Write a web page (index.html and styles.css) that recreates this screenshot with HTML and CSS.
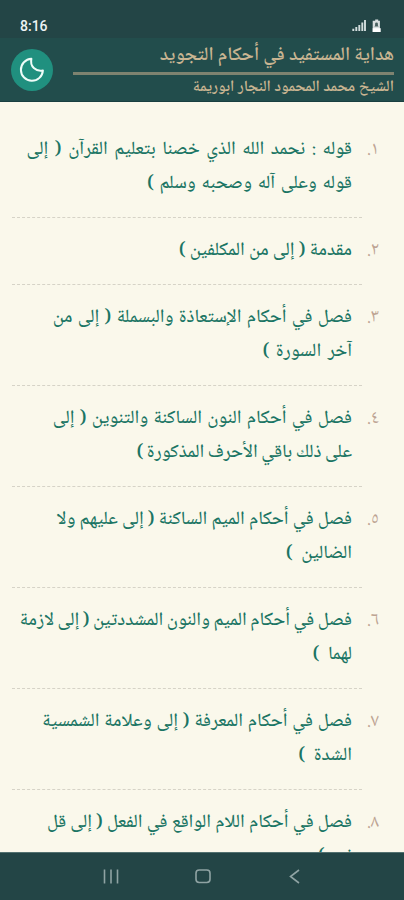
FILE: index.html
```
<!DOCTYPE html>
<html lang="ar" dir="rtl">
<head>
<meta charset="utf-8">
<title>هداية المستفيد في أحكام التجويد</title>
<link rel="stylesheet" href="styles.css">
</head>
<body>
<div class="status" dir="ltr">
  <span class="time">8:16</span>
  <svg class="status-icons" width="30" height="14" viewBox="0 0 30 14">
    <path d="M1.3 12V9.8M4.3 12V8M7.3 12V6M10.3 12V3.5M13 12V1" stroke="#d3dede" stroke-width="1.9" fill="none"/>
    <path d="M21.5 1.8h1.7V.5h3v1.3h1.7v11.1h-7.2V1.8z" fill="#d9dfe0"/>
    <path d="M22.4 7.4h4.2l-.7-.9V4.8a1.4 1.4 0 0 0-2.8 0v1.7z" fill="#48605f"/>
    <path d="M20.7 9.2h8v3.8h-8z" fill="#fff"/>
  </svg>
</div>
<header class="header">
  <div class="titles">
    <h1 class="title">هداية المستفيد في أحكام التجويد</h1>
    <p class="author">الشيخ محمد المحمود النجار ابوريمة</p>
  </div>
  <button class="theme" aria-label="الوضع الليلي">
    <svg width="26" height="26" viewBox="0 0 26 26"><path d="M12.4 1.8A11 11 0 1 0 23.9 13.4C16.8 14.8 10.6 9.6 12.4 1.8Z" fill="none" stroke="#eefcf8" stroke-width="2" stroke-linejoin="round"/></svg>
  </button>
</header>
<main class="list">
  <div class="item"><span class="num">١.</span><p class="text"><span class="line loosest">قوله : نحمد الله الذي خصنا بتعليم القرآن ( إلى</span> <span class="line looser">قوله وعلى آله وصحبه وسلم )</span></p></div>
  <div class="item"><span class="num">٢.</span><p class="text"><span class="line">مقدمة ( إلى من المكلفين )</span></p></div>
  <div class="item"><span class="num">٣.</span><p class="text"><span class="line loose">فصل في أحكام الإستعاذة والبسملة ( إلى من</span> <span class="line loosest">آخر السورة )</span></p></div>
  <div class="item"><span class="num">٤.</span><p class="text"><span class="line loose">فصل في أحكام النون الساكنة والتنوين ( إلى</span> <span class="line tight">على ذلك باقي الأحرف المذكورة )</span></p></div>
  <div class="item"><span class="num">٥.</span><p class="text"><span class="line">فصل في أحكام الميم الساكنة ( إلى عليهم ولا</span> <span class="line wide">الضالين )</span></p></div>
  <div class="item"><span class="num">٦.</span><p class="text"><span class="line tight">فصل في أحكام الميم والنون المشددتين ( إلى لازمة</span> <span class="line wide">لهما )</span></p></div>
  <div class="item"><span class="num">٧.</span><p class="text"><span class="line slight">فصل في أحكام المعرفة ( إلى وعلامة الشمسية</span> <span class="line wide">الشدة )</span></p></div>
  <div class="item"><span class="num">٨.</span><p class="text"><span class="line">فصل في أحكام اللام الواقع في الفعل ( إلى قل</span> <span class="line">نعم )</span></p></div>
</main>
<nav class="nav" dir="ltr">
  <svg width="18" height="18" viewBox="0 0 18 18"><path d="M2.5 1.5v14M9 1.5v14M15.5 1.5v14"/></svg>
  <svg width="18" height="18" viewBox="0 0 18 18"><rect x="2" y="2" width="14" height="12.5" rx="3.2"/></svg>
  <svg width="18" height="18" viewBox="0 0 18 18"><path d="M13 2 4.5 8.5 13 15"/></svg>
</nav>
</body>
</html>
```
FILE: styles.css
```
* { box-sizing: border-box; margin: 0; padding: 0; }
body {
  width: 404px;
  height: 900px;
  overflow: hidden;
  display: flex;
  flex-direction: column;
  background: #faf8eb;
  font-family: "Noto Naskh Arabic", serif;
}
.status {
  flex: none;
  height: 38px;
  padding: 14px 22px 0 20px;
  display: flex;
  justify-content: space-between;
  align-items: center;
  background: #234546;
}
.time {
  font: 500 14px/24px Roboto, sans-serif;
  color: #eef3f3;
}
.header {
  flex: none;
  height: 64px;
  padding: 0 10px 0 11px;
  display: flex;
  justify-content: space-between;
  background: #224d4c;
  border-bottom: 1px solid #193f40;
  color: #c9b592;
}
.titles { width: 321px; margin-inline-end: auto; white-space: nowrap; }
.title {
  height: 37px;
  font-size: 19.2px;
  font-weight: 600;
  line-height: 36px;
  border-bottom: 3px solid #7e8370;
}
.author { font-size: 15.8px; font-weight: 600; line-height: 26px; }
.theme {
  width: 42px;
  height: 42px;
  margin-top: 11px;
  border: 0;
  border-radius: 50%;
  display: flex;
  align-items: center;
  justify-content: center;
  background: #20907f;
}
.list {
  flex: 1;
  min-height: 0;
  padding: 15px 0 0 12px;
  overflow: hidden;
}
.item {
  position: relative;
  display: flex;
  padding-inline-start: 25px;
}
.item::after {
  content: "";
  position: absolute;
  left: 0;
  right: 42px;
  bottom: 0;
  border-bottom: 1px dashed #d6d3c7;
}
.num {
  width: 18px;
  padding-top: 16px;
  color: #bda493;
  font-size: 18.5px;
  line-height: 34px;
}
.text {
  flex: 1;
  padding: 16px 9px 17px 0;
  font-size: 18.8px;
  font-weight: 500;
  line-height: 34px;
  color: #1b7564;
  white-space: nowrap;
}
.line { display: block; }
.tight { word-spacing: -0.7px; }
.slight { word-spacing: 0.6px; }
.loose { word-spacing: 1.1px; }
.looser { word-spacing: 1.6px; }
.loosest { word-spacing: 2.4px; }
.wide { word-spacing: 4.5px; }
.nav {
  flex: none;
  height: 48px;
  padding: 0 100px 0 102px;
  display: flex;
  justify-content: space-between;
  align-items: center;
  background: #234546;
  border-top: 1px solid #537170;
}
.nav svg { fill: none; stroke: #8fa3a3; stroke-width: 1.6; }
```
